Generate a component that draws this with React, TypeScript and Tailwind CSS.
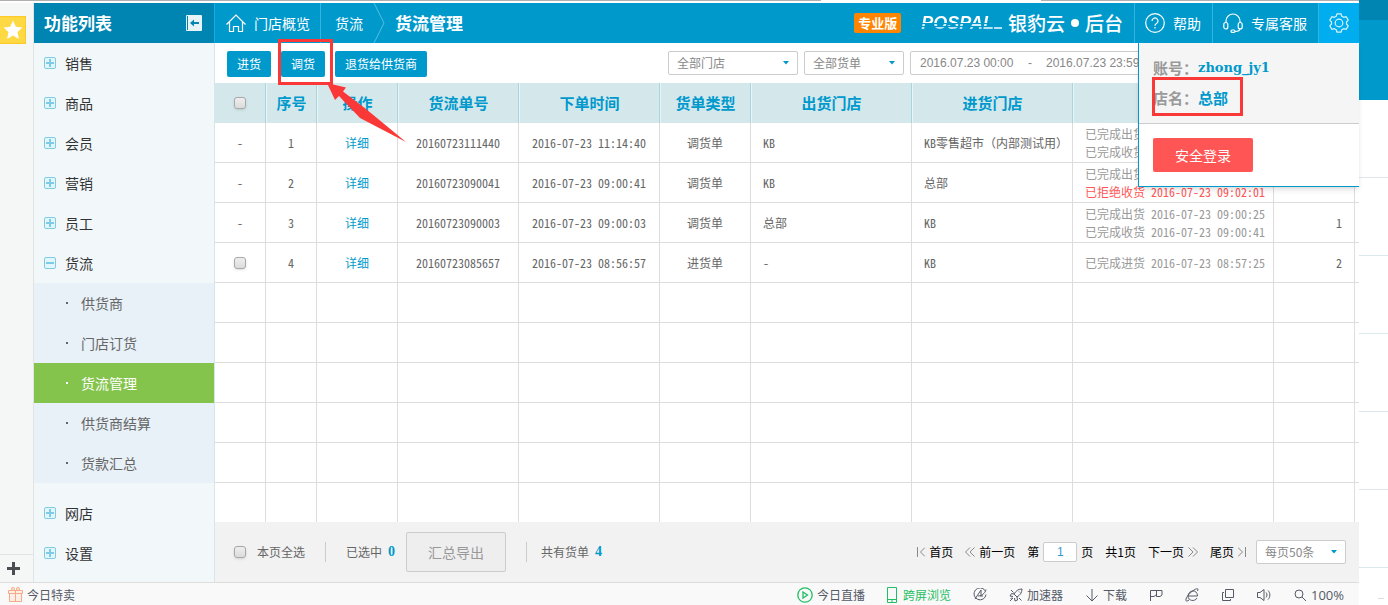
import React, { useState } from 'react';

interface Order {
  id: string;
  time: string;
  type: string;
  from: string;
  to: string;
  status: { text: string; time: string; rejected?: boolean }[];
  count: string;
  selectable?: boolean;
}

const MENU_TOP = ['销售', '商品', '会员', '营销', '员工'];
const MENU_BOTTOM = ['网店', '设置'];
const SUB_MENU = ['供货商', '门店订货', '货流管理', '供货商结算', '货款汇总'];

const ORDERS: Order[] = [
  {
    id: '20160723111440', time: '2016-07-23 11:14:40', type: '调货单', from: 'KB', to: 'KB零售超市（内部测试用）',
    status: [{ text: '已完成出货', time: '' }, { text: '已完成收货', time: '' }], count: ''
  },
  {
    id: '20160723090041', time: '2016-07-23 09:00:41', type: '调货单', from: 'KB', to: '总部',
    status: [{ text: '已完成出货', time: '' }, { text: '已拒绝收货', time: '2016-07-23 09:02:01', rejected: true }], count: ''
  },
  {
    id: '20160723090003', time: '2016-07-23 09:00:03', type: '调货单', from: '总部', to: 'KB',
    status: [{ text: '已完成出货', time: '2016-07-23 09:00:25' }, { text: '已完成收货', time: '2016-07-23 09:00:41' }], count: '1'
  },
  {
    id: '20160723085657', time: '2016-07-23 08:56:57', type: '进货单', from: '-', to: 'KB',
    status: [{ text: '已完成进货', time: '2016-07-23 08:57:25' }], count: '2', selectable: true
  }
];

const HEADERS = ['序号', '操作', '货流单号', '下单时间', '货单类型', '出货门店', '进货门店', '', '', ''];

const CheckBox = ({ label }: { label: string }) => (
  <input
    type="checkbox"
    aria-label={label}
    className="block w-3 h-3 shrink-0 appearance-none rounded-[3px] border border-[#a8a8a8] bg-linear-to-b from-[#eeeeee] to-[#dcdcdc] shadow-sm checked:bg-[#0099cc]"
  />
);

const TreeIcon = ({ open }: { open?: boolean }) => (
  <svg width="12" height="12" viewBox="0 0 12 12" fill="none" aria-hidden="true">
    <rect x="0.5" y="0.5" width="11" height="11" rx="1.5" fill="#e3f6fb" stroke="#7ecbe3" />
    <path d={open ? 'M2 6h8' : 'M2 6h8M6 2v8'} stroke="#7ecbe3" strokeWidth="2" />
  </svg>
);

const Dropdown = ({ label, className }: { label: string; className: string }) => (
  <div className={`relative shrink-0 ${className}`}>
    <select aria-label={label} className="block w-full h-6 pl-2 appearance-none rounded-xs border border-[#cccccc] bg-white text-xs leading-[22px] text-[#888888]">
      <option>{label}</option>
    </select>
    <svg className="absolute right-[9px] top-[10px] pointer-events-none" width="6" height="4" viewBox="0 0 6 4" aria-hidden="true">
      <path d="M0 0h6L3 3.5z" fill="#0099cc" />
    </svg>
  </div>
);

const MenuItem = ({ name, open }: { name: string; open?: boolean }) => (
  <button className="flex items-center gap-[9px] w-full h-10 pl-[10px] text-sm text-[#333333]">
    <TreeIcon open={open} />
    {name}
  </button>
);

const Sidebar = () => {
  const [active, setActive] = useState('货流管理');

  return (
    <aside className="flex flex-col w-[181px] shrink-0 bg-[#f2f7fa] border-r border-[#d4e8ec]">
      <div className="flex items-center justify-between h-10 pl-[10px] pr-3 -mr-px bg-[#0085b2] text-white border-r border-[#11aee6]">
        <h2 className="text-[17px] font-bold">功能列表</h2>
        <button aria-label="收起">
          <svg width="16" height="16" viewBox="0 0 16 16" aria-hidden="true">
            <rect width="16" height="16" rx="1" fill="#e8f3f8" />
            <path d="M1.500 1v14" stroke="#0085b2" />
            <path d="M6 8h7" stroke="#0085b2" strokeWidth="2" />
            <path d="M4 8l4-3.500v7z" fill="#0085b2" />
          </svg>
        </button>
      </div>
      <nav>
        {MENU_TOP.map(name => <MenuItem key={name} name={name} />)}
        <MenuItem name="货流" open />
        <ul className="mb-[10px] bg-[#e8f1f8]">
          {SUB_MENU.map(name => (
            <li key={name}>
              <button
                onClick={() => setActive(name)}
                className={`flex items-center gap-[13px] w-full h-10 pl-8 text-sm ${active === name ? 'bg-[#85c44c] text-white' : 'text-[#666666]'}`}
              >
                <span className="w-[2px] h-[2px] bg-current" />
                {name}
              </button>
            </li>
          ))}
        </ul>
        {MENU_BOTTOM.map(name => <MenuItem key={name} name={name} />)}
      </nav>
    </aside>
  );
};

const AccountPanel = () => (
  <div className="absolute right-0 top-full z-20 w-[221px] h-36 border-l border-b border-[#0099cc] bg-white shadow-md">
    <div className="py-[10px] pl-[14px] bg-[#f5f5f5] border-b border-[#cccccc] text-[15px] leading-[30px] font-bold text-[#999999]">
      <p className="flex">账号：<span className="text-[#0099cc] text-[13px] leading-[30px] font-['DejaVu_Serif',serif]">zhong_jy1</span></p>
      <p className="relative">
        店名：<span className="text-[#0099cc]">总部</span>
        <span className="absolute -left-px -top-[6px] w-[91px] h-[39px] border-3 border-[#fb3838]" />
      </p>
    </div>
    <button className="block w-[100px] h-[34px] mt-[14px] ml-[14px] rounded-xs bg-[#ff5555] text-sm text-white">安全登录</button>
  </div>
);

const Logo = () => (
  <div className="flex items-center mr-[11px]">
    <div className="flex items-end mr-[6px]">
      <span className="text-lg leading-5 font-bold italic font-['Liberation_Sans',sans-serif] bg-[linear-gradient(#ffffff_50%,#0099cc_50%,#0099cc_55%,#d5effa_55%,#d5effa_67%,#0099cc_67%,#0099cc_72%,#b5e2f5_72%)] bg-clip-text text-transparent">POSPAL</span>
      <span className="w-2 h-[2px] mb-1 bg-[#b5e2f5]" />
    </div>
    <span className="text-[19px] font-medium">银豹云</span>
    <span className="w-2 h-2 mx-[6px] rounded-full bg-white" />
    <span className="text-[19px] font-medium">后台</span>
  </div>
);

const Header = () => (
  <header className="relative flex items-center h-10 bg-[#0099cc] text-white text-sm whitespace-nowrap">
    <a href="#home" className="flex items-center gap-2 h-10 pl-[11px] pr-[10px] border-r border-[#33b5e0]">
      <svg width="20" height="20" viewBox="0 0 20 20" fill="none" stroke="#ffffff" strokeWidth="1.2" aria-hidden="true">
        <path d="M.5 11.500L10 2l9.500 9.500M3.500 9v9.500h4v-5h5v5h4V9" />
      </svg>
      门店概览
    </a>
    <a href="#flow" className="pl-[14px] pr-[10px]">货流</a>
    <svg width="12" height="40" viewBox="0 0 12 40" fill="none" stroke="#55bfe3" aria-hidden="true">
      <path d="M1 0l10 20L1 40" />
    </svg>
    <h1 className="ml-[10px] text-[17px] font-bold">货流管理</h1>

    <div className="flex items-center ml-auto">
      <span className="h-5 px-1 mr-5 rounded-xs bg-[#ff8500] text-[13px] leading-5 font-bold">专业版</span>
      <Logo />
      <a href="#help" className="flex items-center gap-2 h-10 pl-[10px] pr-[11px] border-l border-[#33b5e0]">
        <svg width="20" height="20" viewBox="0 0 20 20" fill="none" stroke="#ffffff" strokeWidth="1.2" aria-hidden="true">
          <circle cx="10" cy="10" r="9.300" />
          <path d="M7 8a3 3 0 1 1 4.500 2.600c-1 .6-1.500 1-1.500 2.200M10 14v1.500" />
        </svg>
        帮助
      </a>
      <a href="#service" className="flex items-center gap-2 h-10 pl-[10px] pr-[11px] border-l border-[#33b5e0]">
        <svg width="20" height="20" viewBox="0 0 20 20" fill="none" stroke="#ffffff" strokeWidth="1.2" aria-hidden="true">
          <path d="M3 9.500V8a7 7 0 0 1 14 0v1.500M17 15.500c0 2-2 3-5 3" />
          <rect x="0.8" y="9.5" width="4" height="6.5" rx="2" />
          <rect x="15.2" y="9.5" width="4" height="6.5" rx="2" />
          <rect x="8" y="17" width="4" height="2.4" rx="1.2" />
        </svg>
        专属客服
      </a>
      <button aria-label="设置" className="flex items-center justify-center w-[41px] h-10 bg-[#00aeef] border-l border-[#33b5e0]">
        <svg width="20" height="20" viewBox="0 0 20 20" fill="none" stroke="#d9f3fd" strokeWidth="1.2" strokeLinejoin="round" aria-hidden="true">
          <path d="M8 .8h4l.8 2.400 1.900 1.100 2.500-.6 2 3.400-1.700 1.900v2l1.700 1.900-2 3.400-2.500-.6-1.900 1.100-.8 2.400H8l-.8-2.400-1.900-1.100-2.500.6-2-3.400L2.500 11V9L.8 7.100l2-3.400 2.500.6 1.900-1.100z" />
          <circle cx="10" cy="10" r="3.8" />
        </svg>
      </button>
    </div>
    <AccountPanel />
  </header>
);

const Toolbar = () => (
  <div className="flex items-start h-10 pt-2 pl-3 pr-[13px] text-xs">
    <div className="flex gap-[10px] text-white whitespace-nowrap">
      <button className="h-[26px] px-[10px] rounded-xs bg-[#0099cc]">进货</button>
      <div className="relative">
        <button className="h-[26px] px-[10px] rounded-xs bg-[#0099cc]">调货</button>
        {/* 标注框和箭头 */}
        <span className="absolute -left-[3px] -top-[12px] z-10 w-[55px] h-[46px] border-3 border-[#fb3838]" />
        <svg className="absolute left-[45px] top-[31px] z-10 pointer-events-none" width="82" height="62" viewBox="0 0 82 62" aria-hidden="true">
          <path d="M1 1l19 4.500-3 4L40 27l40 33L34 36 13 14l-4 4z" fill="#fb3838" />
        </svg>
      </div>
      <button className="h-[26px] px-[10px] rounded-xs bg-[#0099cc]">退货给供货商</button>
    </div>
    <div className="flex gap-[6px] ml-auto">
      <Dropdown label="全部门店" className="w-[130px]" />
      <Dropdown label="全部货单" className="w-[100px]" />
      <div className="flex items-center w-[436px] h-6 pl-[9px] border border-[#cccccc] rounded-xs text-[#888888] whitespace-nowrap font-['Liberation_Sans',sans-serif]">
        <input aria-label="开始时间" defaultValue="2016.07.23 00:00" className="w-[108px]" />
        <span className="w-[18px]">-</span>
        <input aria-label="结束时间" defaultValue="2016.07.23 23:59" className="w-[108px]" />
      </div>
    </div>
  </div>
);

const CELL = 'h-10 border-r border-b border-[#dddddd]';

const OrderTable = () => (
  <table className="w-full table-fixed border-separate border-spacing-0 text-xs text-[#666666] whitespace-nowrap font-['Noto_Sans_Mono_CJK_SC','Noto_Sans_CJK_SC',monospace]">
    <colgroup>
      <col className="w-[51px]" />
      <col className="w-[51px]" />
      <col className="w-[81px]" />
      <col className="w-[121px]" />
      <col className="w-[141px]" />
      <col className="w-[91px]" />
      <col className="w-[161px]" />
      <col className="w-[161px]" />
      <col className="w-[201px]" />
      <col className="w-[81px]" />
      <col />
    </colgroup>
    <thead>
      <tr className="bg-[#d4e8ec] text-[15px] text-[#0099cc]">
        <th className="h-10 border-r border-[#a8d4dc]">
          <div className="flex justify-center"><CheckBox label="全选" /></div>
        </th>
        {HEADERS.map((h, i) => (
          <th key={i} className="h-10 border-l border-l-[#e8f4f7] border-r border-r-[#a8d4dc] last:border-r-0 font-bold">{h}</th>
        ))}
      </tr>
    </thead>
    <tbody>
      {ORDERS.map((o, i) => (
        <tr key={o.id}>
          <td className={`${CELL} text-center`}>
            {o.selectable ? <div className="flex justify-center"><CheckBox label={o.id} /></div> : '-'}
          </td>
          <td className={`${CELL} text-center`}>{i + 1}</td>
          <td className={`${CELL} text-center`}><a href="#detail" className="text-[#0099cc]">详细</a></td>
          <td className={`${CELL} text-center`}>{o.id}</td>
          <td className={`${CELL} text-center`}>{o.time}</td>
          <td className={`${CELL} text-center`}>{o.type}</td>
          <td className={`${CELL} pl-3`}>{o.from}</td>
          <td className={`${CELL} pl-3`}>{o.to}</td>
          <td className={`${CELL} pl-3 text-[#999999] leading-[18px]`}>
            {o.status.map(s => (
              <div key={s.text} className={s.rejected ? 'text-[#ff5555]' : ''}>{s.text} {s.time}</div>
            ))}
          </td>
          <td className={`${CELL} pr-3 text-right`}>{o.count}</td>
          <td className="border-b border-[#dddddd]" />
        </tr>
      ))}
      {Array(6).fill(0).map((_, r) => (
        <tr key={r} className="group">
          {Array(11).fill(0).map((_, c) => (
            <td key={c} className="h-10 border-r border-b border-[#dddddd] last:border-r-0 group-last:h-[39px] group-last:border-b-0" />
          ))}
        </tr>
      ))}
    </tbody>
  </table>
);

const PageArrow = ({ d, width }: { d: string; width: string }) => (
  <svg className={width} height="10" fill="none" stroke="#888888" aria-hidden="true"><path d={d} /></svg>
);

const Footer = () => (
  <footer className="flex items-center h-[60px] pl-[19px] pr-[13px] bg-[#f2f2f2] text-xs text-[#666666] whitespace-nowrap">
    <label className="flex items-center gap-[11px]"><CheckBox label="本页全选" />本页全选</label>
    <span className="w-px h-5 mx-5 bg-[#cccccc]" />
    <span>已选中</span>
    <b className="w-[7px] ml-[6px] mr-[11px] text-sm text-[#0099cc] font-['Liberation_Serif',serif]">0</b>
    <button className="w-[100px] h-10 border border-[#cccccc] rounded-xs bg-[#eeeeee] text-sm text-[#999999]">汇总导出</button>
    <span className="w-px h-5 ml-5 mr-[14px] bg-[#cccccc]" />
    <span>共有货单</span>
    <b className="ml-[6px] text-sm text-[#0099cc] font-['Liberation_Serif',serif]">4</b>

    <div className="flex items-center gap-3 ml-auto text-black">
      <a href="#first" className="flex items-center gap-1"><PageArrow width="w-2" d="M.5 0v10M8 .5L3.500 5 8 9.500" />首页</a>
      <a href="#prev" className="flex items-center gap-1"><PageArrow width="w-[10px]" d="M5 .5L.5 5 5 9.500M9.500 .5L5 5l4.500 4.500" />前一页</a>
      <label className="flex items-center gap-1">
        第
        <input defaultValue="1" className="w-[34px] h-5 border border-[#cccccc] rounded-xs bg-white text-center text-[#3399cc] font-['Liberation_Sans',sans-serif]" />
        页
      </label>
      <span>共1页</span>
      <a href="#next" className="flex items-center gap-1">下一页<PageArrow width="w-[10px]" d="M.5 .5L5 5 .5 9.500M5 .5L9.500 5 5 9.500" /></a>
      <a href="#last" className="flex items-center gap-1">尾页<PageArrow width="w-2" d="M0 .5L4.500 5 0 9.500M7.500 0v10" /></a>
      <Dropdown label="每页50条" className="w-[90px] -ml-[2px]" />
    </div>
  </footer>
);

const StatusIcon = ({ d, children }: { d?: string; children?: React.ReactNode }) => (
  <svg width="14" height="14" viewBox="0 0 14 14" fill="none" stroke="currentColor" aria-hidden="true">
    {d && <path d={d} />}
    {children}
  </svg>
);

const StatusBar = () => (
  <div className="flex items-center h-[23px] pl-2 pr-[15px] pt-px border-t border-[#dddddd] bg-[#f9f9f9] text-xs text-[#555a66] whitespace-nowrap">
    <button className="flex items-center gap-1">
      <svg width="15" height="15" viewBox="0 0 15 15" fill="#fdeee6" stroke="#f6a988" aria-hidden="true">
        <path d="M1.500 6.500h12v8h-12zM.5 3.500h14v3H.5zM7.500 3.500v11" />
        <circle cx="5" cy="2" r="1.5" />
        <circle cx="10" cy="2" r="1.5" />
      </svg>
      今日特卖
    </button>
    <div className="flex items-center gap-[22px] ml-auto">
      <button className="flex items-center gap-1">
        <svg width="16" height="16" viewBox="0 0 16 16" fill="none" stroke="#1fbf63" strokeWidth="1.3" aria-hidden="true">
          <circle cx="8" cy="8" r="7.2" />
          <path d="M6 5l4.500 3L6 11z" />
        </svg>
        今日直播
      </button>
      <button className="flex items-center gap-[6px] text-[#1fbf63]">
        <svg width="10" height="16" viewBox="0 0 10 16" fill="none" stroke="currentColor" aria-hidden="true">
          <path d="M.5 .5h9v15h-9zM.5 12.500h9M4 14h2" />
        </svg>
        跨屏浏览
      </button>
      <button aria-label="手势"><StatusIcon d="M12 2.500A6 6 0 1 0 13 6.500M2 11L8 2v6M5 8c3 0 7-2 8-6.500M7 8h3" /></button>
      <button className="flex items-center gap-1">
        <StatusIcon d="M13 1c-4 0-6 2-8 5l3 3c3-2 5-4 5-8zM5 6L2.500 5.500 1 8l3 .5M8 9l.5 3L6 13l-.5-3M4 10l-3 3M3 9.500L1.500 11M10 3.500l1 1M2 2l2.500 2.500M10 10l2.500 2.500" />
        加速器
      </button>
      <button className="flex items-center gap-1"><StatusIcon d="M7 1v12M1.500 7.500L7 13l5.500-5.500" />下载</button>
      <button aria-label="标记"><StatusIcon d="M1.500 13V2.500h11.500v4.500l-2 1.500H7.500v-6M1.500 8.500h3.500l2.500-2" /></button>
      <button aria-label="兼容模式"><StatusIcon d="M3 8h9.500c0-7-9-6.500-9.500 0 0 5 7 6 9 2M4 12c-6 4-3-5 5-10 4-2.500 4.500-1 3.500 1" /></button>
      <button aria-label="窗口"><StatusIcon d="M4.500 1.500h8v8h-8zM3 4.500H1.500v8h8V11" /></button>
      <button aria-label="声音"><StatusIcon d="M.5 4.500H3l4-3v11l-4-3H.5zM9 4.500c1.300 1.500 1.300 3.500 0 5M11 2.500c2.500 2.500 2.500 6.500 0 9" /></button>
      <button className="flex items-center gap-1 text-[13px] leading-4 font-['Open_Sans',sans-serif]">
        <StatusIcon d="M9 9l4 4"><circle cx="6" cy="6" r="4" /></StatusIcon>
        100%
      </button>
    </div>
  </div>
);

export default function App() {
  return (
    <div className="flex min-h-screen bg-white font-['Noto_Sans_CJK_SC',sans-serif]">
      <div className="flex flex-col flex-1 min-w-0">
        <div className="flex justify-between h-[3px]">
          <span className="w-[821px] h-px bg-[#b0b0b0]" />
          <span className="w-[318px] h-px bg-[#b0b0b0]" />
        </div>
        <div className="flex flex-1">
          <div className="flex flex-col w-[34px] shrink-0 bg-[#f5f7f6] border-r border-[#e2e4e4]">
            <button aria-label="收藏" className="flex items-center justify-center w-[26px] h-7 mt-[13px] border border-l-0 border-[#ffc926] bg-[#ffd943]">
              <svg width="20" height="20" viewBox="0 0 20 20" aria-hidden="true">
                <path d="M10 .5l2.800 6.300 6.700.7-5 4.600 1.400 6.900L10 15.500 4.100 19l1.400-6.900-5-4.600 6.700-.7z" fill="#ffffff" />
              </svg>
            </button>
            <button aria-label="添加" className="flex items-center h-7 mt-auto pl-[7px] border-t border-[#e2e4e4]">
              <svg width="13" height="13" viewBox="0 0 13 13" stroke="#4a4d52" strokeWidth="3" aria-hidden="true">
                <path d="M6.500 0v13M0 6.500h13" />
              </svg>
            </button>
          </div>
          <Sidebar />
          <main className="flex flex-col flex-1 min-w-0">
            <Header />
            <Toolbar />
            <OrderTable />
            <Footer />
          </main>
        </div>
        <StatusBar />
      </div>
      {/* 右侧露出的背景窗口 */}
      <div className="flex flex-col w-[29px] shrink-0 overflow-hidden">
        <div className="h-5 bg-[#0085b2]" />
        <div className="h-20 bg-[#0099cc]" />
        {Array(6).fill(0).map((_, i) => (
          <div key={i} className="h-[78px] shrink-0 border-b border-[#dbe7ec]" />
        ))}
        <span className="w-[6px] h-px mt-[30px] ml-[19px] bg-[#dddddd]" />
      </div>
    </div>
  );
}
